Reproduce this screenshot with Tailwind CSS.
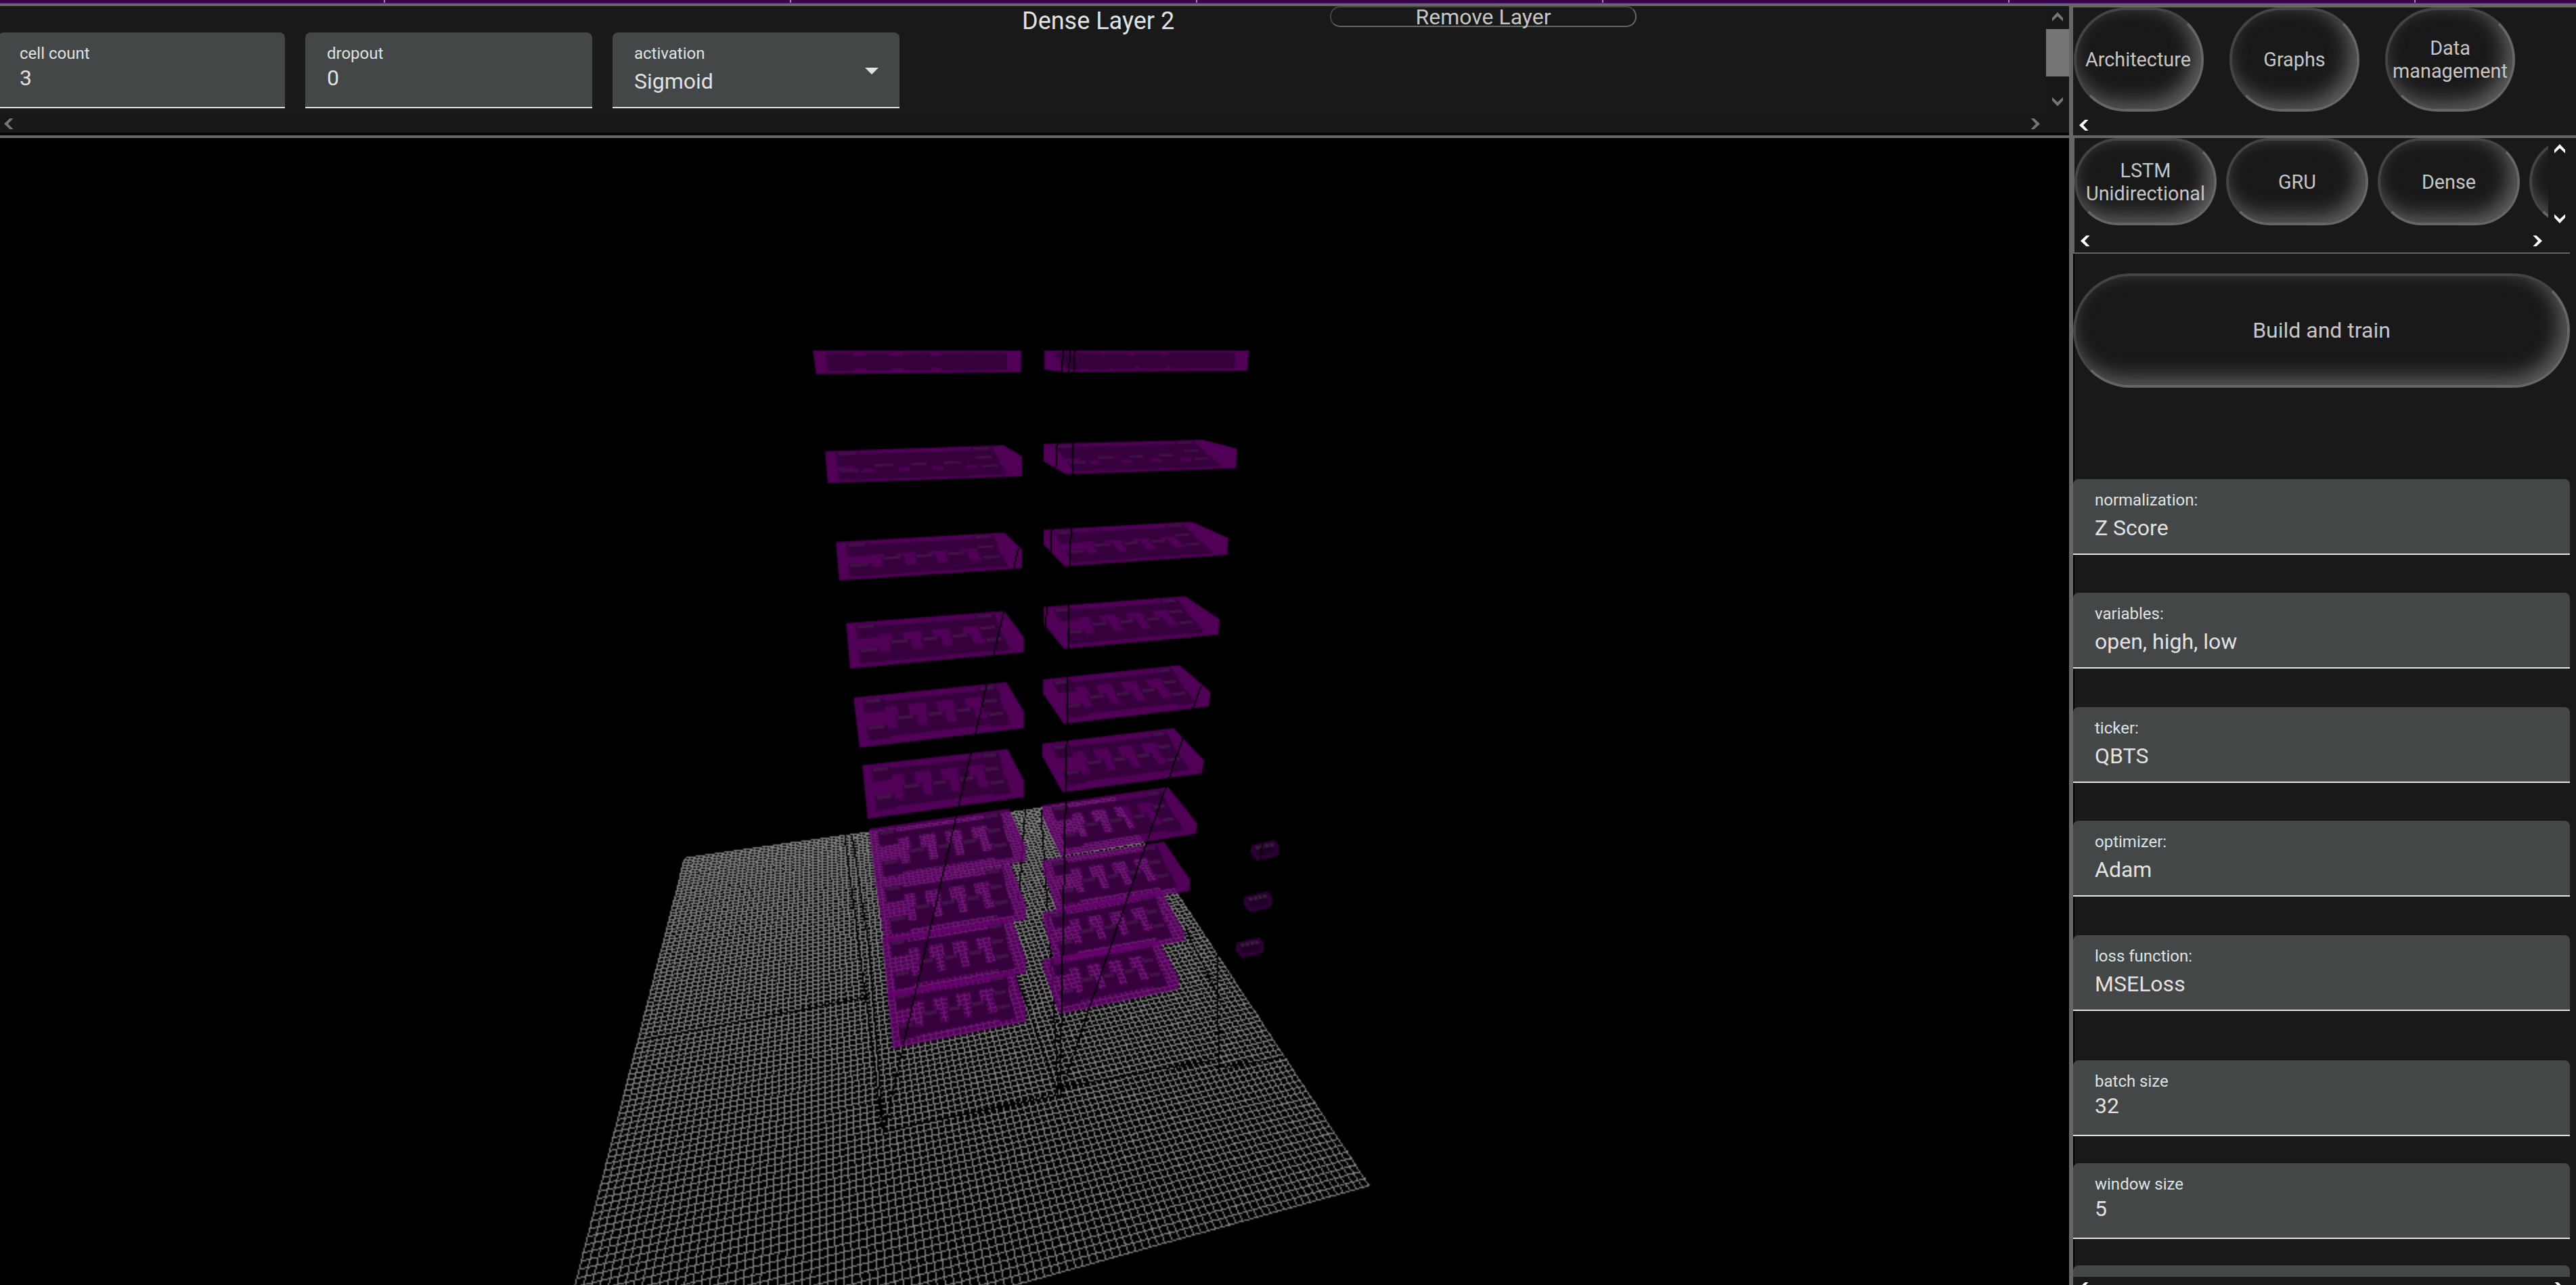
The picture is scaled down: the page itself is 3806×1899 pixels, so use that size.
<!DOCTYPE html>
<html lang="en">
<head>
<meta charset="utf-8">
<title>Network builder</title>
<script src="https://cdn.jsdelivr.net/npm/@tailwindcss/browser@4"></script>
</head>
<body class="w-[3806px] h-[1899px] overflow-hidden bg-[#191919] font-[Roboto,sans-serif] text-[32px] leading-10 text-[#e4e1e0]">
<svg class="hidden">
  <symbol id="left" viewBox="0 0 14 16"><path d="M0 8L8.5 0H13.5L6 8L13.5 16H8.5Z" fill="currentColor"/></symbol>
  <symbol id="right" viewBox="0 0 14 16"><path d="M14 8L5.5 0H.5L8 8L.5 16H5.5Z" fill="currentColor"/></symbol>
  <symbol id="up" viewBox="0 0 16 14"><path d="M8 0L16 8.5V13.5L8 6L0 13.5V8.5Z" fill="currentColor"/></symbol>
  <symbol id="down" viewBox="0 0 16 14"><path d="M8 14L16 5.5V.5L8 8L0 .5V5.5Z" fill="currentColor"/></symbol>
</svg>
<div class="flex h-full flex-col">
  <div class="flex h-[5px] shrink-0 border-b border-[#45105c] bg-[#36004f] pl-[567px]">
    <div class="h-1 w-[600px] border-l-2 border-[#a87fae]"></div><div class="h-1 w-[600px] border-l-2 border-[#a87fae]"></div><div class="h-1 w-[600px] border-l-2 border-[#a87fae]"></div><div class="h-1 w-[600px] border-l-2 border-[#a87fae]"></div><div class="h-1 w-[600px] border-l-2 border-[#a87fae]"></div><div class="h-1 w-[200px] border-l-2 border-[#a87fae]"></div>
  </div>
  <div class="flex min-h-0 flex-1">
    <main class="flex w-[3057px] shrink-0 flex-col">
      <section class="flex h-[199px] shrink-0 flex-col border-y-4 border-[#666]">
        <div class="flex h-[157px]">
          <div class="w-[3023px] overflow-hidden">
            <div class="flex h-[39px] pl-[1510px]">
              <h1 class="w-[455px] text-[36px] leading-[44px] text-[#dfe4e2]">Dense Layer 2</h1>
              <button class="flex h-[31px] w-[453px] items-center justify-center rounded-[15px] border-2 border-t-[#444] border-r-[#666] border-b-[#666] border-l-[#444] text-[#c6c6c6]">Remove Layer</button>
            </div>
            <div class="-ml-[3px] flex gap-[30px]">
              <div class="h-28 w-[424px] rounded-t-lg border-b-2 border-[#dfe6e4] bg-[#434747] pt-[15px] pl-8"><div class="text-2xl/8 text-[#dfe3e2]">cell count</div><div>3</div></div>
              <div class="h-28 w-[424px] rounded-t-lg border-b-2 border-[#dfe6e4] bg-[#434747] pt-[15px] pl-8"><div class="text-2xl/8 text-[#dfe3e2]">dropout</div><div>0</div></div>
              <div class="flex h-28 w-[424px] justify-between rounded-t-lg border-b-2 border-[#dfe6e4] bg-[#434747] pt-[15px] pr-[31px] pl-8"><div><div class="text-2xl/8 text-[#dfe3e2]">activation</div><div class="pt-[5px]">Sigmoid</div></div><svg class="mt-[37px] h-[10px] w-5 text-[#dfe6e4]" viewBox="0 0 20 10"><path d="M0 0H20L10 10Z" fill="currentColor"/></svg></div>
            </div>
          </div>
          <div class="flex w-[34px] flex-col items-center bg-[#17181a] pt-[9px] text-[#757575]">
            <svg class="h-[14px] w-4"><use href="#up"/></svg>
            <div class="mt-[11px] h-[70px] w-full bg-[#757575]"></div>
            <svg class="mt-[30px] h-[14px] w-4"><use href="#down"/></svg>
          </div>
        </div>
        <div class="flex h-[34px] justify-between border-b-4 border-[#060606] bg-[#17181a] pt-[9px] pr-[43px] pl-[6px] text-[#757575]">
          <svg class="h-4 w-[14px]"><use href="#left"/></svg><svg class="h-4 w-[14px]"><use href="#right"/></svg>
        </div>
      </section>
      <section class="min-h-0 flex-1 overflow-hidden bg-black">
        <canvas id="scene" width="1529" height="848" class="h-[1696px] w-[3058px] max-w-none"></canvas>
      </section>
    </main>
    <aside class="flex min-w-0 flex-1 flex-col border-l-[6px] border-[#666]">
      <nav class="h-[199px] shrink-0 border-t-[6px] border-b-4 border-[#666] text-[28.8px] leading-[34px] text-[#c6c6c6]">
        <div class="flex gap-[38px] pl-px text-center">
          <button class="flex h-[154px] w-[192px] items-center justify-center rounded-full border-4 border-t-[#444] border-r-[#666] border-b-[#666] border-l-[#444] shadow-[inset_-10px_-10px_30px_#606060]"><span class="-ml-0.5">Architecture</span></button>
          <button class="flex h-[154px] w-[192px] items-center justify-center rounded-full border-4 border-t-[#444] border-r-[#666] border-b-[#666] border-l-[#444] shadow-[inset_-10px_-10px_30px_#606060]">Graphs</button>
          <button class="flex h-[154px] w-[192px] items-center justify-center rounded-full border-4 border-t-[#444] border-r-[#666] border-b-[#666] border-l-[#444] shadow-[inset_-10px_-10px_30px_#606060]">Data<br>management</button>
        </div>
        <svg class="mt-3 ml-[9px] h-4 w-[14px] text-white"><use href="#left"/></svg>
      </nav>
      <div class="h-[171px] w-[734px] shrink-0 border-b-2 border-l-2 border-[#666] text-[28.8px] leading-[34px] text-[#c6c6c6]">
        <div class="flex">
          <div class="flex w-[700px] gap-[14px] overflow-hidden text-center">
            <button class="flex h-[129px] w-[210px] shrink-0 items-center justify-center rounded-full border-4 border-t-[#444] border-r-[#666] border-b-[#666] border-l-[#444] shadow-[inset_-10px_-10px_30px_#606060]">LSTM<br>Unidirectional</button>
            <button class="flex h-[129px] w-[210px] shrink-0 items-center justify-center rounded-full border-4 border-t-[#444] border-r-[#666] border-b-[#666] border-l-[#444] shadow-[inset_-10px_-10px_30px_#606060]">GRU</button>
            <button class="flex h-[129px] w-[210px] shrink-0 items-center justify-center rounded-full border-4 border-t-[#444] border-r-[#666] border-b-[#666] border-l-[#444] shadow-[inset_-10px_-10px_30px_#606060]">Dense</button>
            <div class="h-[129px] w-[210px] shrink-0 rounded-full border-4 border-t-[#444] border-r-[#666] border-b-[#666] border-l-[#444] shadow-[inset_-10px_-10px_30px_#606060]"></div>
          </div>
          <div class="flex flex-col justify-between pt-[9px] pb-[3px] pl-[9px] text-white"><svg class="h-[14px] w-4"><use href="#up"/></svg><svg class="h-[14px] w-4"><use href="#down"/></svg></div>
        </div>
        <div class="mt-[15px] flex justify-between pr-[41px] pl-[9px] text-white"><svg class="h-4 w-[14px]"><use href="#left"/></svg><svg class="h-4 w-[14px]"><use href="#right"/></svg></div>
      </div>
      <div class="flex h-[1512px] flex-col overflow-hidden shadow-[inset_2px_0_0_#000]">
        <button class="mt-[29px] flex h-[169px] w-[734px] shrink-0 items-center justify-center rounded-full border-4 border-t-[#444] border-r-[#666] border-b-[#666] border-l-[#444] pb-0.5 text-[#c6c6c6] shadow-[inset_-10px_-10px_30px_#606060]">Build and train</button>
        <div class="mt-[135px] h-28 w-[734px] shrink-0 rounded-t-lg border-b-2 border-[#dfe6e4] bg-[#434747] pt-[15px] pl-8"><div class="text-2xl/8 text-[#dfe3e2]">normalization:</div><div class="pt-[5px]">Z Score</div></div>
        <div class="mt-14 h-28 w-[734px] shrink-0 rounded-t-lg border-b-2 border-[#dfe6e4] bg-[#434747] pt-[15px] pl-8"><div class="text-2xl/8 text-[#dfe3e2]">variables:</div><div class="pt-[5px]">open, high, low</div></div>
        <div class="mt-[57px] h-28 w-[734px] shrink-0 rounded-t-lg border-b-2 border-[#dfe6e4] bg-[#434747] pt-[15px] pl-8"><div class="text-2xl/8 text-[#dfe3e2]">ticker:</div><div class="pt-[5px]">QBTS</div></div>
        <div class="mt-14 h-28 w-[734px] shrink-0 rounded-t-lg border-b-2 border-[#dfe6e4] bg-[#434747] pt-[15px] pl-8"><div class="text-2xl/8 text-[#dfe3e2]">optimizer:</div><div class="pt-[5px]">Adam</div></div>
        <div class="mt-[57px] h-28 w-[734px] shrink-0 rounded-t-lg border-b-2 border-[#dfe6e4] bg-[#434747] pt-[15px] pl-8"><div class="text-2xl/8 text-[#dfe3e2]">loss function:</div><div class="pt-[5px]">MSELoss</div></div>
        <div class="mt-[73px] h-28 w-[734px] shrink-0 rounded-t-lg border-b-2 border-[#dfe6e4] bg-[#434747] pt-[15px] pl-8"><div class="text-2xl/8 text-[#dfe3e2]">batch size</div><div>32</div></div>
        <div class="mt-10 h-28 w-[734px] shrink-0 rounded-t-lg border-b-2 border-[#dfe6e4] bg-[#434747] pt-[15px] pl-8"><div class="text-2xl/8 text-[#dfe3e2]">window size</div><div>5</div></div>
        <div class="mt-[39px] h-[17px] w-[734px] shrink-0 rounded-t-lg bg-[#434747]"></div>
      </div>
      <div class="flex h-3 w-[734px] justify-between overflow-hidden pt-2 pr-[9px] pl-[9px] text-white"><svg class="h-4 w-[14px] shrink-0"><use href="#left"/></svg><svg class="h-4 w-[14px] shrink-0"><use href="#right"/></svg></div>
    </aside>
  </div>
</div>
<script>
const c = document.getElementById('scene').getContext('2d');
const X = x => x / 2, Y = y => (y - 204) / 2;

// Hard-edged one-pixel line, as a GL line renders without antialiasing
function line(x0, y0, x1, y1, color) {
  c.fillStyle = color;
  x0 = X(x0); x1 = X(x1); y0 = Y(y0); y1 = Y(y1);
  const n = Math.ceil(Math.max(Math.abs(x1 - x0), Math.abs(y1 - y0)));
  for (let i = 0; i <= n; i++) {
    const y = Math.floor(y0 + (y1 - y0) * i / n);
    if (y < 848) c.fillRect(Math.floor(x0 + (x1 - x0) * i / n), y, 1, 1);
  }
}
function poly(p, color) {
  c.fillStyle = color;
  c.beginPath();
  p.forEach(q => c.lineTo(X(q[0]), Y(q[1])));
  c.closePath();
  c.fill();
}

// Floor grid: unit square projected to its screen corners
const A = [1012, 1268], B = [1646, 1179], C = [2023, 1752], D = [799, 2096];
const dx1 = B[0] - C[0], dx2 = D[0] - C[0], sx = A[0] - B[0] + C[0] - D[0];
const dy1 = B[1] - C[1], dy2 = D[1] - C[1], sy = A[1] - B[1] + C[1] - D[1];
const det = dx1 * dy2 - dx2 * dy1;
const g = (sx * dy2 - dx2 * sy) / det, h = (dx1 * sy - sx * dy1) / det;
function floor(u, v) {
  const w = g * u + h * v + 1;
  return [((B[0] - A[0] + g * B[0]) * u + (D[0] - A[0] + h * D[0]) * v + A[0]) / w,
          ((B[1] - A[1] + g * B[1]) * u + (D[1] - A[1] + h * D[1]) * v + A[1]) / w];
}
const cells = 102;
for (let i = 0; i <= cells; i++) {
  const t = i / cells;
  line(...floor(0, t), ...floor(1, t), '#808080');
  line(...floor(t, 0), ...floor(t, 1), '#808080');
}

// Connections on and just above the floor
[[1248,1235,1305,1675],[1259,1235,1284,1400],[1284,1400,1305,1675],[1335,1543,1306,1672],
 [1538,1197,1553,1417],[1553,1417,1564,1620],[1515,1195,1505,1330],[1500,1438,1562,1610],[1609,1490,1566,1620],
 [1798,1407,1801,1580],[1564,1607,1800,1565],[1800,1578,1898,1562],[1306,1672,1564,1618],[947,1538,1280,1473],
 [1752,1372,1800,1470]
].forEach(l => line(...l, '#000'));

// Layer boxes: outlines, from the top level down
const left = [
 [[1201,518],[1509,518],[1509,550],[1206,553]],
 [[1219,667],[1483,658],[1510,674],[1510,704],[1223,714]],
 [[1235,801],[1484,787],[1510,812],[1510,840],[1240,858]],
 [[1250,921],[1484,903],[1513,942],[1513,964],[1256,988]],
 [[1261,1031],[1487,1008],[1513,1052],[1513,1076],[1270,1105]],
 [[1274,1131],[1489,1107],[1513,1154],[1513,1178],[1282,1210]],
 [[1284,1225],[1491,1195],[1516,1253],[1516,1273],[1294,1308]],
 [[1294,1307],[1493,1277],[1516,1338],[1516,1359],[1307,1393]],
 [[1303,1387],[1495,1358],[1516,1417],[1516,1438],[1312,1475]],
 [[1311,1467],[1499,1435],[1516,1490],[1516,1510],[1319,1550]]];
const right = [
 [[1543,518],[1846,518],[1843,546],[1843,548],[1569,550],[1543,546]],
 [[1542,656],[1778,650],[1828,663],[1826,692],[1575,701],[1542,682]],
 [[1542,783],[1761,771],[1815,795],[1813,820],[1573,837],[1542,805]],
 [[1542,897],[1751,881],[1802,915],[1800,938],[1572,959],[1542,922]],
 [[1541,1004],[1743,983],[1789,1023],[1786,1044],[1572,1070],[1541,1025]],
 [[1540,1099],[1734,1076],[1779,1124],[1776,1143],[1570,1171],[1540,1118]],
 [[1540,1190],[1726,1163],[1769,1217],[1767,1232],[1567,1265],[1540,1205]],
 [[1541,1271],[1720,1244],[1759,1301],[1757,1317],[1562,1348],[1541,1286]],
 [[1541,1348],[1716,1316],[1751,1379],[1749,1391],[1559,1424],[1541,1360]],
 [[1541,1417],[1711,1389],[1743,1447],[1741,1462],[1565,1499],[1541,1431]]];
// Wiring and cells inside a box, in fractions of its front face
const rails = [[.15,.12,.88,.24],[.27,.2,.34,.6],[.45,.2,.52,.6],[.63,.2,.7,.6],[.83,.15,.92,.84],[.15,.7,.86,.84]];
const blocks = [[.06,.07,.19,.33],[.06,.6,.19,.88],[.25,.46,.38,.75],[.44,.46,.56,.75],[.62,.45,.74,.75],[.81,.05,.93,.3],[.8,.32,.92,.58],[.81,.6,.93,.89]];
function box(p, level, side) {
  poly(p, 'rgba(100,0,109,.8)');
  const q = [p[0], p[1], p.length === 4 ? p[2] : p[3], p.length === 6 ? p[4] : p[p.length - 1]];
  const at = (u, v) => [0, 1].map(k => (q[0][k] * (1 - u) + q[1][k] * u) * (1 - v) + (q[3][k] * (1 - u) + q[2][k] * u) * v);
  const rect = (r, e, color) => poly([at(r[0], r[1]), at(r[2], r[1]), at(r[2], Math.min(.92, r[3] + e)), at(r[0], Math.min(.92, r[3] + e))], color);
  if (level === 0) {
    rect([.06,.24,.93,.76], 0, '#36003c');
    const bumps = side ? [[.04,.12],[.13,.27],[.28,.4],[.43,.57],[.59,.93]] : [[.06,.19],[.25,.37],[.43,.56],[.61,.74],[.74,.93]];
    bumps.forEach(b => rect([b[0],.09,b[1],.88], 0, '#36003c'));
    return;
  }
  const e = [0, .34, .14, .06][level] || 0;
  rails.forEach(r => rect(r, e, '#36003c'));
  blocks.forEach(r => rect(r, e / 2, '#36003c'));
  blocks.forEach(r => rect([r[0] + .01, r[1], r[2] - .02, r[1] + .07], 0, '#43134a'));
}
for (let i = 9; i >= 0; i--) { box(left[i], i, 0); box(right[i], i, 1); }

// Small dense-layer cells
[[1847,1241],[1837,1317],[1825,1385]].forEach(([x, y]) => {
  poly([[x+2,y+8],[x+36,y],[x+43,y+10],[x+42,y+22],[x+34,y+26],[x+10,y+31],[x,y+19]], '#2e0036');
  poly([[x+6,y+12],[x+34,y+6],[x+38,y+18],[x+12,y+25]], '#210027');
  for (let i = 0; i < 4; i++) poly([[x+7+i*7,y+10-i*1.4],[x+12+i*7,y+9-i*1.4],[x+15+i*7,y+13-i*1.4],[x+10+i*7,y+15-i*1.4]], '#39253e');
});

// Connections in front of the boxes
[[1505,810,1335,1543],[1774,1014,1609,1490],[1588,518,1581,840],[1581,840,1566,1618],[1571,518,1545,925],[1581,518,1579,550],[1865,1243,1862,1272]]
  .forEach(l => line(...l, '#000'));
</script>
</body>
</html>
